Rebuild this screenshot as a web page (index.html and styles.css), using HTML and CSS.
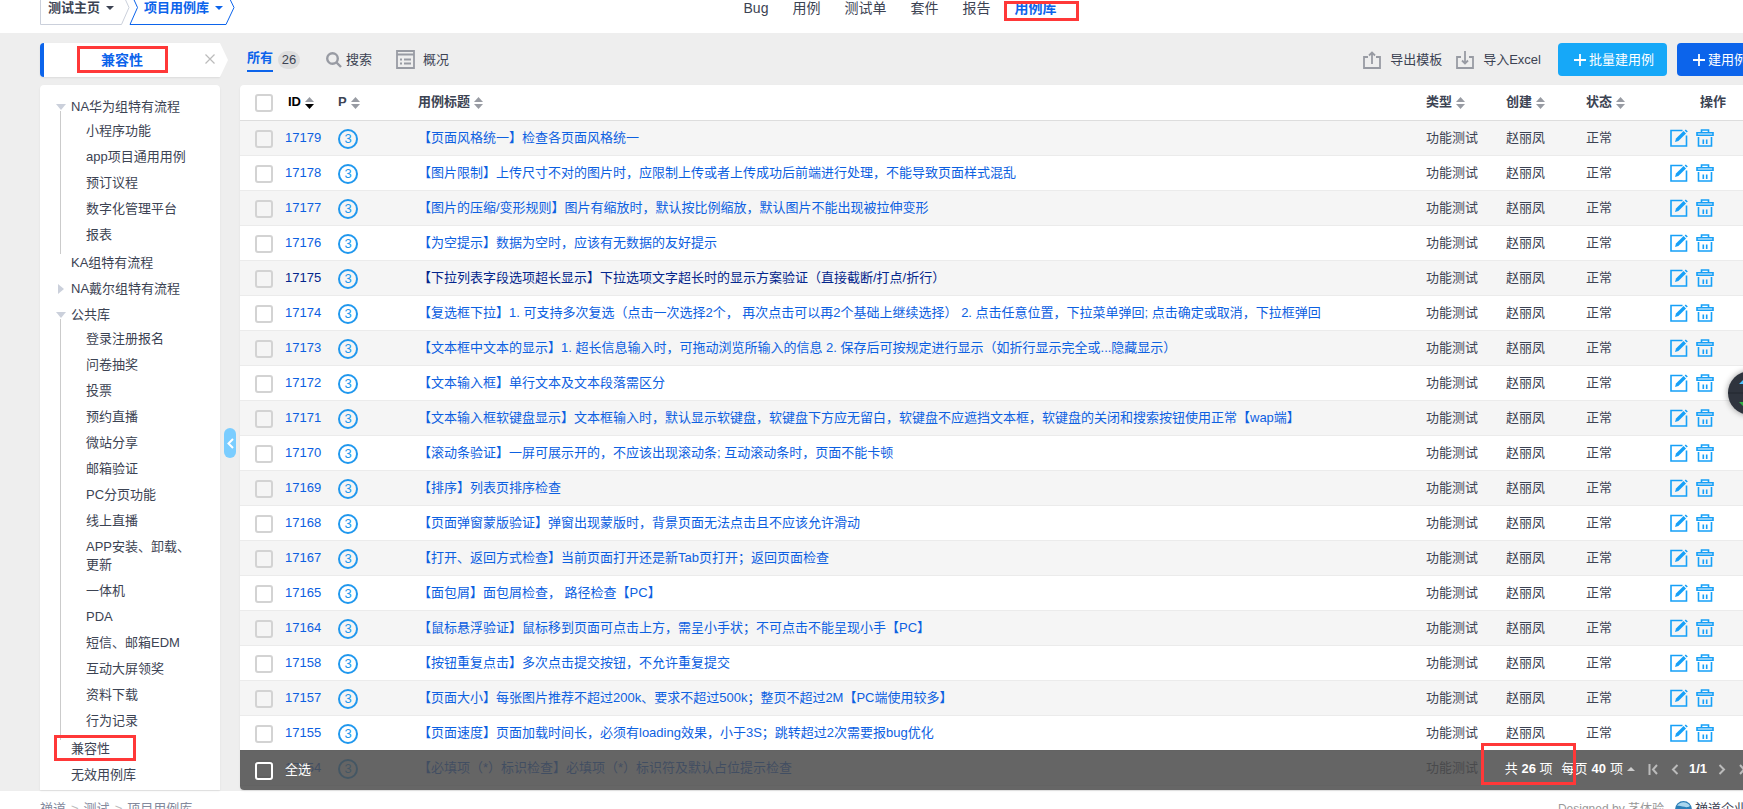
FILE: index.html
```html
<!DOCTYPE html>
<html lang="zh-CN">
<head>
    <meta charset="UTF-8">
    <meta name="viewport" content="width=device-width, initial-scale=1.0">
    <title>项目用例库</title>
    <link rel="stylesheet" href="styles.css">
</head>
<body>
    <svg class="sprite" aria-hidden="true">
        <symbol id="icon-edit" viewBox="0 0 18 18">
            <path d="M12.5 1.500H1v15.500h15.500V6.500" fill="none" stroke="currentColor" stroke-width="1.600"/>
            <path d="M5 13l1-3.400 7.600-7.600 2.400 2.400-7.600 7.600z" fill="currentColor"/>
            <path d="M14.600 1.600l1.200-1.200 2 2-1.200 1.200z" fill="currentColor"/>
        </symbol>
        <symbol id="icon-trash" viewBox="0 0 18 18">
            <path d="M5.500 3.500V1h7v2.500M1 6.200V3.700h16v2.500zM2.500 8v9h13V8M7.300 10.500v4.500M10.700 10.500v4.500" fill="none" stroke="currentColor" stroke-width="1.600"/>
        </symbol>
        <symbol id="icon-sort" viewBox="0 0 9 12">
            <path d="M4.500 0L9 5H0z"/>
            <path d="M4.500 12L9 7H0z"/>
        </symbol>
        <symbol id="icon-export" viewBox="0 0 18 18">
            <path d="M5 6H1v11h16V6h-4M9 13V2M6 4.500L9 1.500l3 3" fill="none" stroke="currentColor" stroke-width="1.800"/>
        </symbol>
        <symbol id="icon-import" viewBox="0 0 18 18">
            <path d="M5 6H1v11h16V6h-4M9 0v12M6 9.500l3 3 3-3" fill="none" stroke="currentColor" stroke-width="1.800"/>
        </symbol>
        <symbol id="icon-plus" viewBox="0 0 12 12">
            <path d="M6 0v12M0 6h12" fill="none" stroke="currentColor" stroke-width="1.800"/>
        </symbol>
    </svg>

    <div class="page">
        <header class="header">
            <div class="crumbs">
                <button class="crumb crumb-home">
                    <svg class="crumb-shape" viewBox="0 0 90 34"><path d="M.5 0v33.500h81L89 16.500 81.500 0" /></svg>
                    <span>测试主页</span><i class="caret-down"></i>
                </button>
                <button class="crumb crumb-lib">
                    <svg class="crumb-shape" viewBox="0 0 106 34"><path d="M1 0l7.500 16.500L1 33.500h96l8-17L97 0" /></svg>
                    <span>项目用例库</span><i class="caret-down"></i>
                </button>
            </div>
            <nav class="nav">
                <a href="#">Bug</a>
                <a href="#">用例</a>
                <a href="#">测试单</a>
                <a href="#">套件</a>
                <a href="#">报告</a>
                <a href="#" class="active">用例库<span class="mark mark-nav"></span></a>
            </nav>
        </header>

        <main class="main">
            <div class="side-title">
                <strong>兼容性</strong>
                <button class="close" aria-label="关闭">
                    <svg viewBox="0 0 10 10"><path d="M.5.5l9 9M9.500.5l-9 9"/></svg>
                </button>
                <span class="mark mark-title"></span>
            </div>

            <div class="toolbar">
                <a href="#" class="tab"><span>所有</span></a>
                <span class="badge">26</span>
                <a href="#" class="tool search">
                    <svg class="icon-search" viewBox="0 0 16 16"><circle cx="6.500" cy="6.500" r="5.300"/><path d="M10.500 10.500l4.500 4.500"/></svg>搜索
                </a>
                <a href="#" class="tool overview">
                    <svg class="icon-list" viewBox="0 0 19 19"><path d="M1 1h17v17H1zM1 4.500h17M4 9.500h2M8 9.500h7M4 13.500h2M8 13.500h7"/></svg>概况
                </a>
                <a href="#" class="tool export"><svg class="icon"><use href="#icon-export"/></svg>导出模板</a>
                <a href="#" class="tool import"><svg class="icon"><use href="#icon-import"/></svg>导入Excel</a>
                <button class="btn btn-info"><svg><use href="#icon-plus"/></svg>批量建用例</button>
                <button class="btn btn-primary"><svg><use href="#icon-plus"/></svg>建用例</button>
            </div>

            <aside class="sidebar">
                <ul class="tree">
                    <li class="open"><a href="#">NA华为组特有流程</a>
                        <ul>
                            <li><a href="#">小程序功能</a></li>
                            <li><a href="#">app项目通用用例</a></li>
                            <li><a href="#">预订议程</a></li>
                            <li><a href="#">数字化管理平台</a></li>
                            <li><a href="#">报表</a></li>
                        </ul>
                    </li>
                    <li><a href="#">KA组特有流程</a></li>
                    <li class="closed"><a href="#">NA戴尔组特有流程</a></li>
                    <li class="open"><a href="#">公共库</a>
                        <ul>
                            <li><a href="#">登录注册报名</a></li>
                            <li><a href="#">问卷抽奖</a></li>
                            <li><a href="#">投票</a></li>
                            <li><a href="#">预约直播</a></li>
                            <li><a href="#">微站分享</a></li>
                            <li><a href="#">邮箱验证</a></li>
                            <li><a href="#">PC分页功能</a></li>
                            <li><a href="#">线上直播</a></li>
                            <li><a href="#">APP安装、卸载、更新</a></li>
                            <li><a href="#">一体机</a></li>
                            <li><a href="#">PDA</a></li>
                            <li><a href="#">短信、邮箱EDM</a></li>
                            <li><a href="#">互动大屏领奖</a></li>
                            <li><a href="#">资料下载</a></li>
                            <li><a href="#">行为记录</a></li>
                        </ul>
                    </li>
                    <li><a href="#">兼容性</a><span class="mark mark-tree"></span></li>
                    <li><a href="#">无效用例库</a></li>
                </ul>
                <button class="collapse" aria-label="收起">
                    <svg viewBox="0 0 7 11"><path d="M6 1L1.500 5.500 6 10"/></svg>
                </button>
            </aside>

            <section class="panel">
                <table class="cases">
                    <colgroup>
                        <col class="col-id">
                        <col class="col-small">
                        <col>
                        <col class="col-small">
                        <col class="col-small">
                        <col class="col-small">
                        <col class="col-actions">
                    </colgroup>
                    <thead>
                        <tr>
                            <th class="cell-id"><label><input type="checkbox" aria-label="全选"><span class="sorted">ID<svg class="sort" viewBox="0 0 9 12"><path class="sort-up" d="M4.500 0L9 5H0z"/><path d="M4.500 12L9 7H0z"/></svg></span></label></th>
                            <th>P<svg class="sort"><use href="#icon-sort"/></svg></th>
                            <th>用例标题<svg class="sort"><use href="#icon-sort"/></svg></th>
                            <th>类型<svg class="sort"><use href="#icon-sort"/></svg></th>
                            <th>创建<svg class="sort"><use href="#icon-sort"/></svg></th>
                            <th>状态<svg class="sort"><use href="#icon-sort"/></svg></th>
                            <th class="th-actions">操作</th>
                        </tr>
                    </thead>
                    <tbody id="caseRows"></tbody>
                </table>

                <div class="table-footer">
                    <label class="check-all"><input type="checkbox"><span>全选</span></label>
                    <div class="pager">
                        <span class="total">共 <strong>26</strong> 项<span class="mark mark-total"></span></span>
                        <button class="per-page">每页 <strong>40</strong> 项<i class="caret-up"></i></button>
                        <button class="page-btn" aria-label="首页"><svg viewBox="0 0 11 11"><path d="M1.500 0v11M9 1L5 5.500 9 10"/></svg></button>
                        <button class="page-btn" aria-label="上一页"><svg viewBox="0 0 11 11"><path d="M7.500 1L3 5.500 7.500 10"/></svg></button>
                        <strong class="page-num">1/1</strong>
                        <button class="page-btn" aria-label="下一页"><svg viewBox="0 0 11 11"><path d="M3.500 1L8 5.500 3.500 10"/></svg></button>
                        <button class="page-btn" aria-label="末页"><svg viewBox="0 0 11 11"><path d="M2 1l4 4.500L2 10M9.500 0v11"/></svg></button>
                    </div>
                </div>
            </section>
        </main>

        <footer class="footer">
            <div class="path"><a href="#">禅道</a><i>&gt;</i><a href="#">测试</a><i>&gt;</i><a href="#">项目用例库</a></div>
            <div class="powered">
                <span>Designed by 艺体验</span>
                <a href="#"><svg viewBox="0 0 17 17"><circle cx="8.500" cy="8.500" r="8.500" fill="#2c7fb8"/><path d="M2 5C5 0 12 0 15 5c-4 3-9-1-13 0z" fill="#a9d6ee"/><path d="M3 11c4-4 8 1 12-1-2 6-9 7-12 1z" fill="#5fb0dc"/></svg>禅道企业版</a>
            </div>
        </footer>
    </div>

    <div class="speed">
        <svg viewBox="0 0 44 44">
            <path d="M0 22h44" stroke="#22262e" stroke-width="1"/>
            <path d="M11 13l6-6 6 6h-4v4h-4v-4z" fill="#4cc3ff"/>
            <path d="M11 31l6 6 6-6h-4v-4h-4v4z" fill="#2fb344"/>
        </svg>
    </div>

    <script>
        const cases = [
            [17179, '【页面风格统一】检查各页面风格统一'],
            [17178, '【图片限制】上传尺寸不对的图片时，应限制上传或者上传成功后前端进行处理，不能导致页面样式混乱'],
            [17177, '【图片的压缩/变形规则】图片有缩放时，默认按比例缩放，默认图片不能出现被拉伸变形'],
            [17176, '【为空提示】数据为空时，应该有无数据的友好提示'],
            [17175, '【下拉列表字段选项超长显示】下拉选项文字超长时的显示方案验证（直接截断/打点/折行）'],
            [17174, '【复选框下拉】1. 可支持多次复选（点击一次选择2个， 再次点击可以再2个基础上继续选择） 2. 点击任意位置，下拉菜单弹回; 点击确定或取消，下拉框弹回'],
            [17173, '【文本框中文本的显示】1. 超长信息输入时，可拖动浏览所输入的信息 2. 保存后可按规定进行显示（如折行显示完全或...隐藏显示）'],
            [17172, '【文本输入框】单行文本及文本段落需区分'],
            [17171, '【文本输入框软键盘显示】文本框输入时，默认显示软键盘，软键盘下方应无留白，软键盘不应遮挡文本框，软键盘的关闭和搜索按钮使用正常【wap端】'],
            [17170, '【滚动条验证】一屏可展示开的，不应该出现滚动条; 互动滚动条时，页面不能卡顿'],
            [17169, '【排序】列表页排序检查'],
            [17168, '【页面弹窗蒙版验证】弹窗出现蒙版时，背景页面无法点击且不应该允许滑动'],
            [17167, '【打开、返回方式检查】当前页面打开还是新Tab页打开；返回页面检查'],
            [17165, '【面包屑】面包屑检查， 路径检查【PC】'],
            [17164, '【鼠标悬浮验证】鼠标移到页面可点击上方，需呈小手状；不可点击不能呈现小手【PC】'],
            [17158, '【按钮重复点击】多次点击提交按钮，不允许重复提交'],
            [17157, '【页面大小】每张图片推荐不超过200k、要求不超过500k；整页不超过2M【PC端使用较多】'],
            [17155, '【页面速度】页面加载时间长，必须有loading效果，小于3S；跳转超过2次需要报bug优化'],
            [17154, '【必填项（*）标识检查】必填项（*）标识符及默认占位提示检查']
        ];
        const visitedId = 17175;

        document.getElementById('caseRows').innerHTML = cases.map(([id, title]) => `
            <tr class="${id === visitedId ? 'visited' : ''}">
                <td class="cell-id"><label><input type="checkbox"><span>${id}</span></label></td>
                <td><span class="pri">3</span></td>
                <td><a href="#">${title}</a></td>
                <td>功能测试</td>
                <td>赵丽凤</td>
                <td>正常</td>
                <td class="actions">
                    <div>
                        <button aria-label="编辑"><svg><use href="#icon-edit"/></svg></button>
                        <button aria-label="删除"><svg><use href="#icon-trash"/></svg></button>
                    </div>
                </td>
            </tr>
        `).join('');
    </script>
</body>
</html>
```
FILE: styles.css
```css
* {
    margin: 0;
    padding: 0;
    box-sizing: border-box;
}

html {
    overflow: hidden;
}

body {
    font-family: "Liberation Sans", "Noto Sans CJK SC", sans-serif;
    font-size: 13px;
    line-height: 18px;
    color: #3c4353;
    background: #fff;
    text-spacing-trim: space-all;
    overflow: hidden;
}

a {
    color: inherit;
    text-decoration: none;
}

button {
    font: inherit;
    color: inherit;
    background: none;
    border: none;
    cursor: pointer;
}

ul {
    list-style: none;
}

svg {
    display: block;
    flex: none;
}

.sprite {
    position: absolute;
    width: 0;
    height: 0;
}

/* the page runs on past the right edge and under the top one */
.page {
    margin-top: -17px;
    margin-right: -57px;
}

.mark {
    position: absolute;
    border: 3px solid #ff3838;
    pointer-events: none;
}

/* header */
.header {
    display: grid;
    grid-template-columns: 1fr auto 1fr;
    align-items: center;
    height: 50px;
    padding: 0 40px;
}

.crumbs {
    display: flex;
}

.crumb {
    position: relative;
    display: flex;
    align-items: center;
    gap: 6px;
    height: 34px;
    font-weight: bold;
}

.crumb-home {
    width: 89px;
    padding-left: 8px;
}

.crumb-lib {
    width: 106px;
    padding-left: 15px;
    color: #0c64eb;
}

.crumb-shape {
    position: absolute;
    left: 0;
    top: 0;
    height: 34px;
    fill: none;
    stroke: #cbd0db;
}

.crumb-lib .crumb-shape {
    stroke: #0c64eb;
}

.caret-down {
    border: 4px solid transparent;
    border-top-color: currentColor;
    border-bottom: none;
}

.caret-up {
    border: 4px solid transparent;
    border-bottom-color: #ccc;
    border-top: none;
}

.nav {
    display: flex;
    gap: 24px;
    font-size: 14px;
}

.nav .active {
    position: relative;
    color: #0c64eb;
    font-weight: bold;
}

.mark-nav {
    left: -10px;
    top: 2px;
    width: 75px;
    height: 20px;
}

/* main area */
.main {
    display: grid;
    grid-template-columns: 180px 1fr;
    column-gap: 20px;
    row-gap: 8px;
    padding: 10px 40px 0;
    background: #eee;
    border-bottom: 1px solid #eee;
}

.side-title {
    position: relative;
    display: flex;
    align-items: center;
    justify-content: center;
    height: 34px;
    padding-right: 20px;
    background: #fff;
    border-left: 4px solid #0c64eb;
    border-radius: 4px 0 0 4px;
    box-shadow: 0 1px 2px rgba(0,0,0,0.08);
    font-size: 14px;
    color: #0c64eb;
}

.side-title::after {
    content: "";
    position: absolute;
    left: 100%;
    top: 0;
    border: 17px solid transparent;
    border-left: 8px solid #fff;
    border-right: none;
}

.close {
    position: absolute;
    right: 5px;
    top: 11px;
}

.close svg {
    width: 10px;
    height: 10px;
    stroke: #bbb;
    stroke-width: 1.2;
}

.mark-title {
    left: 33px;
    top: 3px;
    width: 91px;
    height: 27px;
}

/* toolbar */
.toolbar {
    display: flex;
    align-items: center;
    height: 33px;
    padding-left: 7px;
}

.tab {
    padding-bottom: 1px;
    line-height: 22px;
    border-bottom: 2px solid #0c64eb;
    color: #0c64eb;
    font-weight: bold;
}

.badge {
    width: 22px;
    margin: 0 26px 0 5px;
    border-radius: 9px;
    background: #ddd;
    text-align: center;
}

.tool {
    display: flex;
    align-items: center;
}

.icon-search {
    width: 16px;
    height: 16px;
    margin-right: 4px;
    fill: none;
    stroke: #989ba3;
    stroke-width: 2.4;
}

.overview {
    margin-left: 24px;
}

.icon-list {
    width: 19px;
    height: 19px;
    margin-right: 8px;
    fill: none;
    stroke: #989ba3;
    stroke-width: 1.8;
}

.icon {
    width: 18px;
    height: 18px;
    margin-right: 9px;
    color: #989ba3;
}

.export {
    margin-left: auto;
}

.import {
    margin: 0 17px 0 14px;
}

.btn {
    display: flex;
    align-items: center;
    gap: 3px;
    height: 33px;
    padding: 0 13px 0 16px;
    border-radius: 4px;
    color: #fff;
    white-space: nowrap;
}

.btn svg {
    width: 12px;
    height: 12px;
}

.btn-info {
    margin-right: 10px;
    background: #16a8f8;
}

.btn-primary {
    background: #0c64eb;
}

/* module tree */
.sidebar {
    position: relative;
    padding: 9px 20px 2px 16px;
    background: #fff;
    border-radius: 4px 4px 0 0;
    box-shadow: 0 1px 2px rgba(0,0,0,0.08);
}

.tree li {
    position: relative;
}

.tree a {
    display: block;
    padding: 4px 0;
}

.tree > li {
    padding-left: 15px;
}

.tree ul {
    margin: -2px 0 2px;
    padding-left: 15px;
}

.tree .open::before {
    content: "";
    position: absolute;
    left: 0;
    top: 10px;
    border: 5px solid transparent;
    border-top: 6px solid #cbd0db;
    border-bottom: none;
}

.tree .open::after {
    content: "";
    position: absolute;
    left: 4px;
    top: 17px;
    bottom: -6px;
    width: 1px;
    background: #cbcbcb;
}

.tree .closed::before {
    content: "";
    position: absolute;
    left: 2px;
    top: 8px;
    border: 5px solid transparent;
    border-left: 6px solid #cbd0db;
    border-right: none;
}

.mark-tree {
    left: -2px;
    top: -1px;
    width: 82px;
    height: 26px;
    z-index: 1;
}

.collapse {
    position: absolute;
    right: -16px;
    top: 343px;
    display: flex;
    align-items: center;
    justify-content: center;
    width: 12px;
    height: 30px;
    border-radius: 6px;
    background: #7acdff;
}

.collapse svg {
    width: 7px;
    height: 11px;
    fill: none;
    stroke: #fff;
    stroke-width: 2;
}

/* case table */
.panel {
    position: relative;
    padding-bottom: 4px;
    background: #fff;
    border-radius: 4px;
    box-shadow: 0 1px 2px rgba(0,0,0,0.08);
}

.cases {
    width: 100%;
    table-layout: fixed;
    border-collapse: separate;
    border-spacing: 0;
    white-space: nowrap;
}

.col-id {
    width: 90px;
}

.col-small {
    width: 80px;
}

.col-actions {
    width: 102px;
}

.cases th,
.cases td {
    height: 35px;
    padding: 0 8px;
    border-bottom: 1px solid #ebebeb;
    text-align: left;
    vertical-align: middle;
}

.cases th {
    height: 36px;
    padding-bottom: 2px;
    border-bottom-color: #ddd;
}

.cases tbody tr:nth-child(odd) {
    background: #f5f5f5;
}

.cases .cell-id {
    padding-left: 15px;
    padding-right: 0;
}

.cell-id label {
    display: flex;
    align-items: center;
    gap: 12px;
}

.cases td a,
.cases td label {
    color: #0c60e1;
}

.cases .visited a,
.cases .visited label {
    color: #03258c;
}

input[type="checkbox"] {
    appearance: none;
    flex: none;
    width: 18px;
    height: 18px;
    margin-top: 2px;
    border: 2px solid #d3d3d3;
    border-radius: 3px;
}

.sort {
    display: inline-block;
    width: 9px;
    height: 12px;
    margin-left: 4px;
    vertical-align: -3px;
    fill: #989ba3;
}

.sorted {
    padding-left: 3px;
    color: #000;
}

.sorted .sort {
    fill: #000;
}

.sorted .sort-up {
    fill: #989ba3;
}

.pri {
    display: block;
    width: 20px;
    height: 20px;
    margin-top: 2px;
    border: 2px solid #2098ee;
    border-radius: 50%;
    line-height: 16px;
    text-align: center;
    color: #2098ee;
}

.cases .th-actions {
    padding-right: 0;
    text-align: center;
}

.cases .actions {
    padding: 0 0 0 12px;
}

.actions div {
    display: flex;
    gap: 8px;
}

.actions button {
    color: #16a0f8;
}

.actions svg {
    width: 18px;
    height: 18px;
}

.table-footer {
    position: absolute;
    left: 0;
    right: 0;
    bottom: 0;
    display: flex;
    align-items: center;
    justify-content: space-between;
    height: 40px;
    padding-left: 15px;
    border-radius: 0 0 4px 4px;
    background: rgba(75,75,75,0.85);
    color: #fff;
}

.check-all {
    display: flex;
    align-items: center;
    gap: 12px;
}

.check-all input {
    border-color: #fff;
}

.pager {
    display: flex;
    align-items: center;
    height: 40px;
    padding: 0 6px 2px 24px;
    background: #666;
}

.total {
    position: relative;
    margin-right: 9px;
}

.mark-total {
    left: -24px;
    top: -17px;
    width: 95px;
    height: 42px;
}

.per-page {
    display: flex;
    align-items: center;
    gap: 4px;
    margin-right: 7px;
}

.page-btn {
    display: flex;
    align-items: center;
    justify-content: center;
    width: 22px;
    height: 22px;
}

.page-btn svg {
    width: 11px;
    height: 11px;
    fill: none;
    stroke: #bbb;
    stroke-width: 2;
}

.page-num {
    width: 24px;
    text-align: center;
}

/* footer */
.footer {
    display: flex;
    justify-content: space-between;
    padding: 9px 40px;
    color: #838a9d;
}

.path i {
    margin: 0 5px;
    font-style: normal;
    color: #bbb;
}

.powered {
    display: flex;
    gap: 11px;
    font-size: 12px;
    color: #999;
}

.powered a {
    display: flex;
    align-items: center;
    gap: 3px;
    font-size: 13px;
    color: #3c4353;
}

.powered svg {
    width: 17px;
    height: 17px;
}

/* floating widget, half out of the window */
.speed {
    position: fixed;
    right: -29px;
    top: 371px;
    width: 44px;
    height: 44px;
    border-radius: 50%;
    background: #2f343e;
    box-shadow: 0 0 6px rgba(0,0,0,0.4);
}
```
